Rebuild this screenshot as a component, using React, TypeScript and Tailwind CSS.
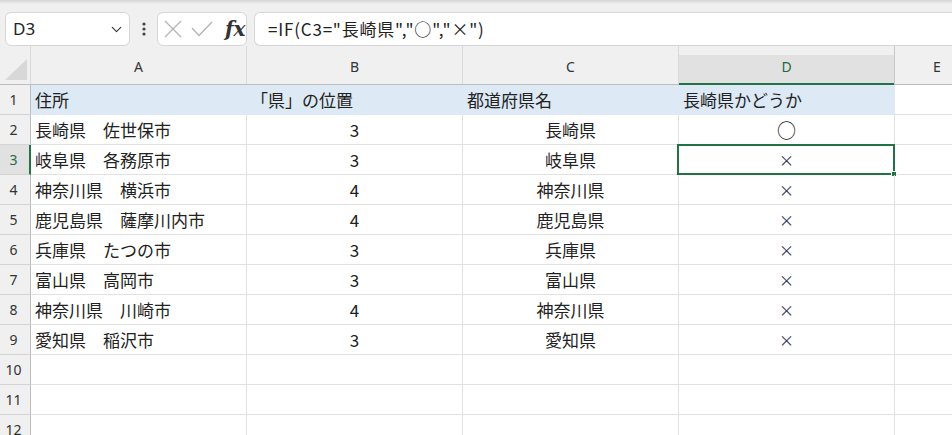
import { ChevronDown } from "lucide-react";

const rows: string[][] = [
  ["住所", "「県」の位置", "都道府県名", "長崎県かどうか"],
  ["長崎県　佐世保市", "3", "長崎県", "○"],
  ["岐阜県　各務原市", "3", "岐阜県", "×"],
  ["神奈川県　横浜市", "4", "神奈川県", "×"],
  ["鹿児島県　薩摩川内市", "4", "鹿児島県", "×"],
  ["兵庫県　たつの市", "3", "兵庫県", "×"],
  ["富山県　高岡市", "3", "富山県", "×"],
  ["神奈川県　川崎市", "4", "神奈川県", "×"],
  ["愛知県　稲沢市", "3", "愛知県", "×"],
  ["", "", "", ""],
  ["", "", "", ""],
  ["", "", "", ""],
];

const FormulaBar = () => {
  return (
    <div className="h-[46px] shrink-0 bg-[#f0f0f0] flex flex-col">
      <div className="h-[4px] shrink-0 bg-linear-to-b from-[#d4d4d4] to-[#f0f0f0]" />
      <div className="mt-[8px] flex h-[34px] shrink-0 items-stretch">
        <div className="ml-[5px] w-[125px] bg-white border border-[#d6d6d6] rounded-[6px] flex items-center justify-between pl-[7px] pr-[4px] text-[17px] text-[#222] font-['Noto_Sans',sans-serif]">
          <span>D3</span>
          <ChevronDown size={17} strokeWidth={1.6} className="text-[#333]" />
        </div>
        <div className="w-[27px] flex items-center justify-center">
          <svg width="4" height="14" viewBox="0 0 4 14">
            <circle cx="2" cy="2" r="1.6" fill="#444" />
            <circle cx="2" cy="7" r="1.6" fill="#444" />
            <circle cx="2" cy="12" r="1.6" fill="#444" />
          </svg>
        </div>
        <div className="w-[90px] bg-white border border-[#d6d6d6] rounded-[6px] flex items-center pl-[6px] gap-[9px]">
          <svg width="18" height="18" viewBox="0 0 18 18">
            <path d="M1 1 L17 17 M17 1 L1 17" stroke="#b4b4b4" strokeWidth="1.3" fill="none" />
          </svg>
          <svg width="22" height="16" viewBox="0 0 22 16">
            <path d="M1 7 L8 14.5 L21 1" stroke="#b4b4b4" strokeWidth="1.3" fill="none" />
          </svg>
          <span className="ml-[3px] text-[20px] leading-none italic font-bold text-[#333] font-['DejaVu_Serif',serif]">
            fx
          </span>
        </div>
        <div className="ml-[7px] flex-1 bg-white border border-r-0 border-[#d6d6d6] rounded-l-[6px] flex items-center pl-[13px] text-[17px] tracking-[0.8px] text-[#222] font-['Noto_Sans_CJK_JP',sans-serif]">
          =IF(C3="長崎県","○","×")
        </div>
      </div>
    </div>
  );
};

const ColumnHeader = () => {
  const cols = ["A", "B", "C", "D"];
  return (
    <div className="flex h-[39px] shrink-0 border-b border-[#bdbdbd] bg-[#f0f0f0] text-[14px] text-[#333] font-['Noto_Sans',sans-serif]">
      <div className="w-[31px] shrink-0 border-r border-[#dadada] flex items-end justify-end pb-[4px] pr-[3px]">
        <svg width="22" height="21" viewBox="0 0 22 21">
          <path d="M22 0 L22 21 L0 21 Z" fill="#d8d8d8" />
        </svg>
      </div>
      {cols.map((c) =>
        c === "D" ? (
          <div key={c} className="w-[216px] shrink-0 border-r border-[#c8c8c8] flex flex-col justify-end">
            <div className="h-[30px] -mb-px bg-[#e1e1e1] border-b-2 border-[#217346] flex items-center justify-center pb-[6px] text-[#1d6b3f]">
              {c}
            </div>
          </div>
        ) : (
          <div key={c} className="w-[216px] shrink-0 border-r border-[#dadada] flex flex-col justify-end">
            <div className="h-[29px] flex items-center justify-center pb-[7px]">{c}</div>
          </div>
        )
      )}
      <div className="w-[84px] shrink-0 flex flex-col justify-end">
        <div className="h-[29px] flex items-center justify-center pb-[7px]">E</div>
      </div>
    </div>
  );
};

const Row = ({ n, cells }: { n: number; cells: string[] }) => {
  const header = n === 1;
  const active = n === 3;
  return (
    <div className="flex h-[30px] shrink-0">
      <div
        className={
          active
            ? "w-[31px] shrink-0 border-r-2 border-r-[#217346] border-b border-b-[#d4d4d4] bg-[#e1e1e1] text-[#1d6b3f] flex items-center justify-center pr-[2px] text-[14px] font-['Noto_Sans',sans-serif]"
            : "w-[31px] shrink-0 border-r border-r-[#bdbdbd] border-b border-b-[#d4d4d4] bg-[#f0f0f0] text-[#333] flex items-center justify-center pr-[3px] text-[14px] font-['Noto_Sans',sans-serif]"
        }
      >
        {n}
      </div>
      {cells.map((v, i) => (
        <div
          key={i}
          className={
            (header
              ? "bg-[#dde9f5] border-[#dde9f5] justify-start pl-[4px] "
              : i === 0
              ? "border-[#e1e1e1] justify-start pl-[4px] "
              : "border-[#e1e1e1] justify-center ") +
            "relative w-[216px] shrink-0 border-r border-b flex items-center text-[17px] leading-none text-[#222] font-['Noto_Sans_CJK_JP',sans-serif]"
          }
        >
          {v === "×" ? (
            <span className="text-[15px] text-[#2b3650]">×</span>
          ) : v === "○" ? (
            <span className="text-[19px]">○</span>
          ) : (
            v
          )}
          {active && i === 3 && (
            <div className="absolute -left-[2px] -top-[1px] -right-px -bottom-px border-2 border-[#217346]">
              <div className="absolute -right-[4px] -bottom-[4px] w-[6px] h-[6px] bg-[#217346] border border-white" />
            </div>
          )}
        </div>
      ))}
      <div className="w-[84px] shrink-0 border-r border-b border-[#e1e1e1]" />
    </div>
  );
};

export default function App() {
  return (
    <div className="w-[952px] h-[435px] overflow-hidden bg-white flex flex-col">
      <FormulaBar />
      <ColumnHeader />
      {rows.map((r, i) => (
        <Row key={i} n={i + 1} cells={r} />
      ))}
    </div>
  );
}
